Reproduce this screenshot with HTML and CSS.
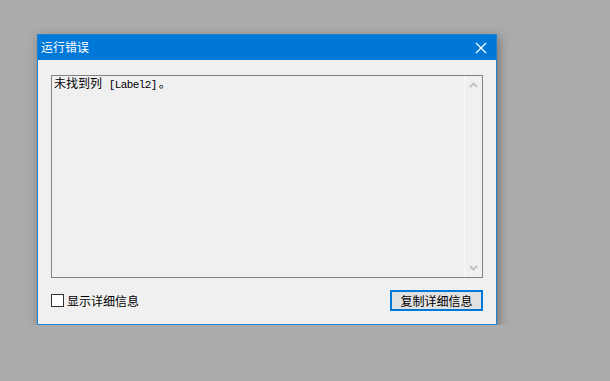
FILE: index.html
```html
<!DOCTYPE html>
<html lang="zh">
<head>
    <meta charset="UTF-8">
    <title>运行错误</title>
    <link rel="stylesheet" href="styles.css">
</head>
<body>
    <div class="dialog">
        <div class="titlebar">
            <span class="title">运行错误</span>
            <svg class="close" width="12" height="12" viewBox="0 0 12 12">
                <path d="M1 1 L11 11 M11 1 L1 11" stroke="#fff" stroke-width="1.3" fill="none"/>
            </svg>
        </div>
        <div class="content">
            <div class="textbox">
                <div class="message">未找到列 <span class="mono">[Label2]</span>。</div>
                <div class="scrollbar">
                    <svg width="9" height="6" viewBox="0 0 9 6"><path d="M1 5 L4.5 1.5 L8 5" stroke="#c2c2c2" stroke-width="2" fill="none"/></svg>
                    <svg width="9" height="6" viewBox="0 0 9 6"><path d="M1 1 L4.5 4.5 L8 1" stroke="#c2c2c2" stroke-width="2" fill="none"/></svg>
                </div>
            </div>
            <div class="footer">
                <label class="check"><span class="box"></span>显示详细信息</label>
                <button class="copy">复制详细信息</button>
            </div>
        </div>
    </div>
</body>
</html>
```

FILE: styles.css
```css
body {
    margin: 0;
    background: #ababab;
    font-family: "Noto Sans CJK SC", "Liberation Sans", sans-serif;
    font-size: 12px;
    color: #000;
}
.dialog {
    margin: 34px 0 0 37px;
    width: 458px;
    border: 1px solid #1883d7;
    background: #f0f0f0;
    box-shadow: 2px 3px 10px rgba(0, 0, 0, 0.35);
}
.titlebar {
    height: 25px;
    background: #0078d7;
    display: flex;
    align-items: center;
    justify-content: space-between;
    padding: 0 9px 0 3px;
}
.title {
    color: #fff;
    font-size: 12px;
    line-height: 12px;
    margin-top: -1px;
}
.close {
    display: block;
}
.content {
    padding: 15px 13px 13px 13px;
}
.textbox {
    height: 201px;
    border: 1px solid #828282;
    background: #f0f0f0;
    display: flex;
}
.message {
    flex: 1;
    padding: 0 2px;
    line-height: 14px;
}
.mono {
    font-family: "Liberation Mono", monospace;
    font-size: 11px;
    letter-spacing: -0.6px;
    margin-left: 4px;
    margin-right: 2px;
}
.scrollbar {
    width: 17px;
    border-left: 1px solid #fafafa;
    display: flex;
    flex-direction: column;
    justify-content: space-between;
    align-items: center;
    padding: 6px 0 6px;
}
.scrollbar svg {
    display: block;
}
.footer {
    margin-top: 12px;
    display: flex;
    justify-content: space-between;
    align-items: center;
}
.check {
    display: flex;
    align-items: center;
    gap: 3px;
}
.box {
    width: 11px;
    height: 11px;
    border: 1px solid #333;
    background: #fff;
}
.copy {
    width: 93px;
    height: 21px;
    border: 2px solid #0078d7;
    background: #e1e1e1;
    font-family: inherit;
    font-size: 12px;
    padding: 0;
    color: #000;
}
```
